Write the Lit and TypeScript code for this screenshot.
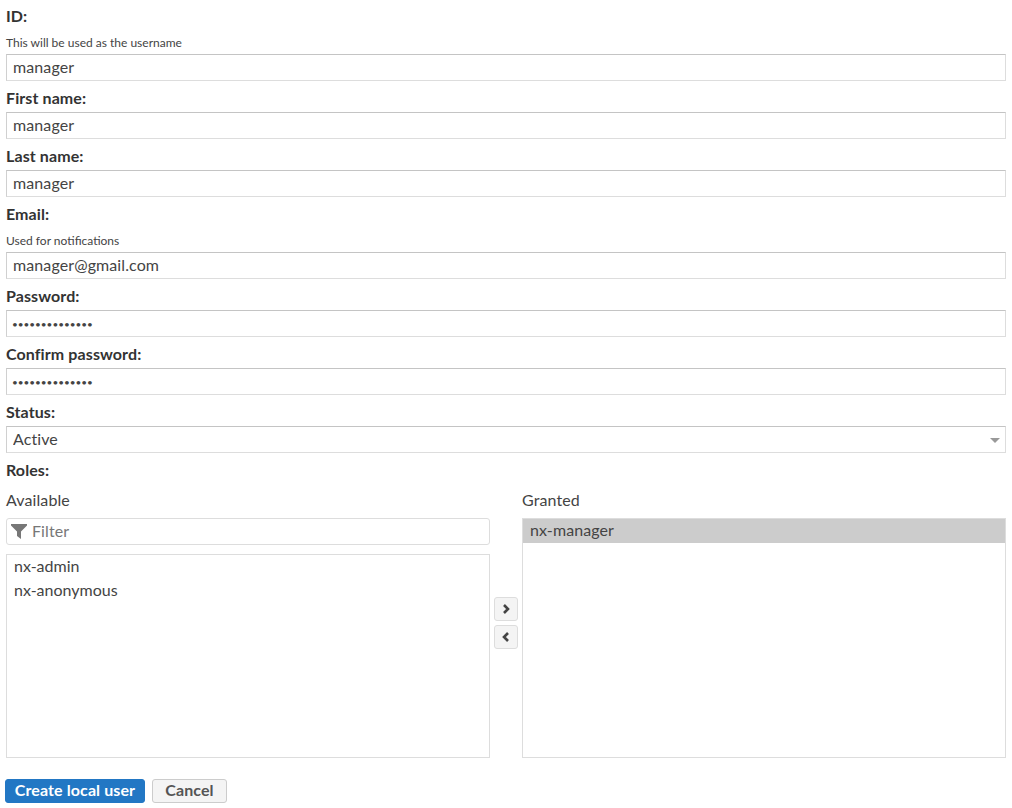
import { LitElement, html, css, svg } from "lit";
import { customElement } from "lit/decorators.js";

@customElement("app-root")
export class AppRoot extends LitElement {
  static styles = css`
    :host { display: block; width: 1012px; height: 808px; background: #fff; overflow: hidden;
      font-family: Lato, "Open Sans", sans-serif; color: #333; font-size: 16px; letter-spacing: 0.1px; }
    .form { display: flex; flex-direction: column; padding: 6px 6px 0; }
    .field { display: flex; flex-direction: column; }
    .field + .field { margin-top: 7px; }
    .label { font-weight: 700; line-height: 19px; height: 20px; margin-bottom: 4px; color: #333; }
    .label.tight { margin-bottom: 0; }
    .hint { font-size: 12px; letter-spacing: 0; line-height: 14px; height: 14px; margin: 10px 0 4px; color: #444; }
    input, select { box-sizing: border-box; width: 100%; height: 27px; margin: 0; padding: 0 6px 2px;
      font: inherit; letter-spacing: inherit; color: #444; background: #fff; outline: none; border-radius: 0;
      border: 1px solid #ddd; border-top-color: #c4c4c4; border-left-color: #d0d0d0; }
    input.pw { font-size: 10px; letter-spacing: -0.03px; padding: 0 6px 0 5px; }
    .select { position: relative; }
    select { appearance: none; -webkit-appearance: none; }
    .arrow { position: absolute; right: 6px; top: 12px; width: 0; height: 0;
      border-left: 5px solid transparent; border-right: 5px solid transparent; border-top: 5px solid #999; }
    .transfer { display: grid; grid-template-columns: 484px 32px 484px; margin-top: 7px; }
    .col { display: flex; flex-direction: column; }
    .title { line-height: 18px; height: 20px; margin: 4px 0 7px; color: #444; }
    .filter { box-sizing: border-box; height: 27px; display: flex; align-items: center; gap: 5px;
      padding: 0 0 0 4px; border: 1px solid #ddd; border-radius: 3px; margin-bottom: 9px; color: #777; }
    .filter svg { display: block; }
    .filter span { line-height: 23px; height: 25px; }
    .list { box-sizing: border-box; border: 1px solid #ddd; padding: 0; color: #444; }
    .left .list { height: 204px; }
    .right .list { height: 240px; }
    .item { height: 24px; line-height: 22px; padding: 0 7px; letter-spacing: 0; }
    .item.sel { background: #ccc; letter-spacing: 0.1px; }
    .arrows { display: flex; flex-direction: column; align-items: center; gap: 4px; padding-top: 110px; }
    .mv { box-sizing: border-box; width: 24px; height: 24px; padding: 0; display: flex; align-items: center;
      justify-content: center; background: #f4f4f4; border: 1px solid #ddd; border-radius: 3px; }
    .actions { display: flex; gap: 7px; padding: 21px 0 0 5px; }
    .btn { box-sizing: border-box; height: 24px; padding: 0 0 3px; font: inherit; font-weight: 700; border-radius: 3px;
      display: flex; align-items: center; justify-content: center; }
    .primary { width: 140px; background: #2277c4; color: #fff; border: 1px solid #2277c4; }
    .cancel { width: 75px; background: #f4f4f4; color: #555; border: 1px solid #ccc; }
  `;

  private field(label: string, value: string, hint = "", type = "text") {
    return html`<div class="field">
      <div class=${hint ? "label tight" : "label"}>${label}</div>
      ${hint ? html`<div class="hint">${hint}</div>` : ""}
      <input class=${type === "password" ? "pw" : ""} type=${type} .value=${value} />
    </div>`;
  }

  private chevron(d: string) {
    return html`<svg width="10" height="12" viewBox="0 0 10 12">${svg`<path d=${d} fill="none" stroke="#444" stroke-width="2.6"/>`}</svg>`;
  }

  render() {
    return html`<div class="form">
      ${this.field("ID:", "manager", "This will be used as the username")}
      ${this.field("First name:", "manager")}
      ${this.field("Last name:", "manager")}
      ${this.field("Email:", "manager@gmail.com", "Used for notifications")}
      ${this.field("Password:", "aaaaaaaaaaaaaa", "", "password")}
      ${this.field("Confirm password:", "aaaaaaaaaaaaaa", "", "password")}
      <div class="field">
        <div class="label">Status:</div>
        <div class="select"><select><option>Active</option></select><span class="arrow"></span></div>
      </div>
      <div class="field"><div class="label tight">Roles:</div></div>
      <div class="transfer">
        <div class="col left">
          <div class="title">Available</div>
          <div class="filter">
            <svg width="16" height="15" viewBox="0 0 16 15"><path d="M0 0H16V1.5L10 7.5V15L6 12V7.5L0 1.5Z" fill="#777"/></svg>
            <span>Filter</span>
          </div>
          <div class="list"><div class="item">nx-admin</div><div class="item">nx-anonymous</div></div>
        </div>
        <div class="arrows">
          <div class="mv">${this.chevron("M3 2L7 6L3 10")}</div>
          <div class="mv">${this.chevron("M7 2L3 6L7 10")}</div>
        </div>
        <div class="col right">
          <div class="title">Granted</div>
          <div class="list"><div class="item sel">nx-manager</div></div>
        </div>
      </div>
    </div>
    <div class="actions">
      <div class="btn primary">Create local user</div>
      <div class="btn cancel">Cancel</div>
    </div>`;
  }
}
